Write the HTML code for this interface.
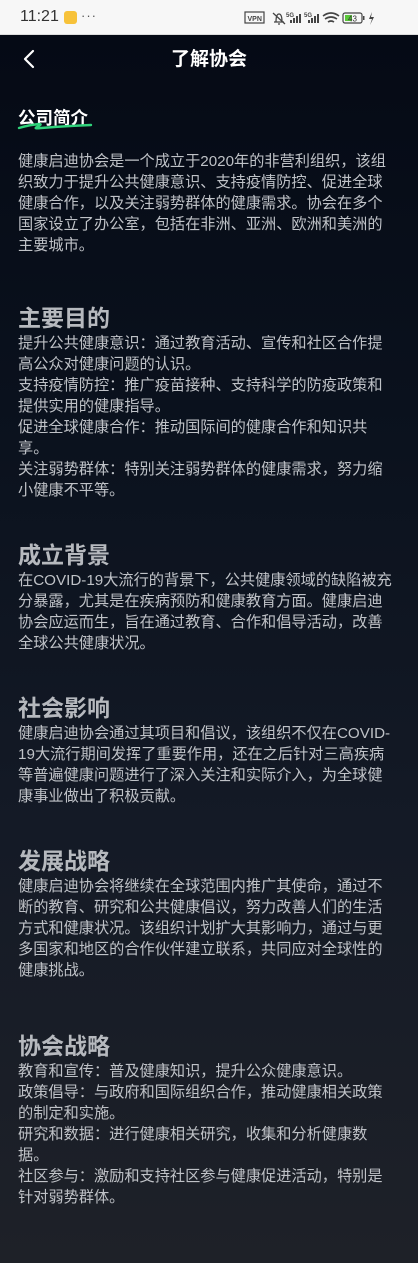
<!DOCTYPE html>
<html><head><meta charset="utf-8">
<style>
*{margin:0;padding:0;box-sizing:border-box}
html,body{width:418px;height:1280px;overflow:hidden;background:#fff}
body{position:relative;font-family:"Liberation Sans","Noto Sans CJK SC",sans-serif}
.status{position:absolute;left:0;top:0;width:418px;height:35px;background:#f7f7f7;border-bottom:1px solid #ddd}
.main{position:absolute;left:0;top:35px;width:418px;height:1228px;background:linear-gradient(180deg,#050a15 0%,#0a111d 30%,#141a26 65%,#1e2128 100%)}
.title{position:absolute;left:0;width:418px;text-align:center;color:#fff;font-size:19px;font-weight:bold;line-height:28px}
.sec{position:absolute;left:18px;white-space:nowrap}
.sec h2{font-size:23px;font-weight:bold;color:#b6b9be;line-height:30px}
.sec p{font-size:15.2px;color:#bfc2c7;line-height:21px}
</style></head><body>
<div class="status">
  <div style="position:absolute;left:20px;top:8px;font-size:16px;color:#333">11:21</div>
  <div style="position:absolute;left:64px;top:11px;width:13px;height:13px;background:#f7c23a;border-radius:3px"></div>
  <div style="position:absolute;left:81px;top:8px;font-size:13px;color:#555;letter-spacing:1px">···</div>
  <svg style="position:absolute;left:244px;top:10px" width="160" height="16" viewBox="0 0 160 16">
    <rect x="1" y="2" width="19" height="11" fill="none" stroke="#444" stroke-width="1.2"/>
    <text x="3.5" y="11" font-size="7" font-family="Liberation Sans" font-weight="bold" fill="#444">VPN</text>
    <path d="M30 12h10M32 12c0-6 1-8 3-8s3 2 3 8M34 14h2M29 3l12 11" stroke="#444" stroke-width="1.3" fill="none"/>
    <text x="42" y="7" font-size="6" font-family="Liberation Sans" font-weight="bold" fill="#444">5G</text>
    <rect x="46" y="10" width="2" height="3" fill="#444"/><rect x="49" y="8" width="2" height="5" fill="#444"/><rect x="52" y="6" width="2" height="7" fill="#444"/><rect x="55" y="4" width="2" height="9" fill="#444"/>
    <text x="60" y="7" font-size="6" font-family="Liberation Sans" font-weight="bold" fill="#444">5G</text>
    <rect x="64" y="10" width="2" height="3" fill="#444"/><rect x="67" y="8" width="2" height="5" fill="#444"/><rect x="70" y="6" width="2" height="7" fill="#444"/><rect x="73" y="4" width="2" height="9" fill="#444"/>
    <path d="M79 6q8-6 16 0M81 9q6-4 12 0M84 12q3-2 6 0" stroke="#444" stroke-width="1.6" fill="none"/>
    <rect x="99" y="3" width="19" height="10" rx="2" fill="none" stroke="#444" stroke-width="1.2"/>
    <rect x="101" y="5" width="7" height="6" fill="#5ac83a"/>
    <text x="104" y="11.5" font-size="8" font-family="Liberation Sans" fill="#333">43</text>
    <rect x="119" y="6" width="1.5" height="4" fill="#444"/>
    <path d="M128 2l-3 7h3l-2 6 4-8h-3z" fill="#444"/>
  </svg>
</div>
<div class="main">
  <svg style="position:absolute;left:22px;top:14px" width="14" height="20" viewBox="0 0 14 20"><path d="M11 2L3 10l8 8" stroke="#fff" stroke-width="2.2" fill="none" stroke-linecap="round" stroke-linejoin="round"/></svg>
  <div class="title" style="top:11px">了解协会</div>
</div>
<div class="sec" style="top:106px">
  <div style="font-size:17.5px;font-weight:bold;color:#fff;line-height:24px">公司简介</div>
</div>
<svg style="position:absolute;left:16px;top:120px" width="78" height="12" viewBox="0 0 78 12"><path d="M3 8q10-3 20-4q4 0-2 3q-4 2 4 1q25-2 50-3" stroke="#2fd27a" stroke-width="2.4" fill="none" stroke-linecap="round"/></svg>
<div class="sec" style="top:151px"><p>健康启迪协会是一个成立于2020年的非营利组织，该组<br>织致力于提升公共健康意识、支持疫情防控、促进全球<br>健康合作，以及关注弱势群体的健康需求。协会在多个<br>国家设立了办公室，包括在非洲、亚洲、欧洲和美洲的<br>主要城市。</p></div>

<div class="sec" style="top:303px"><h2>主要目的</h2><p>提升公共健康意识：通过教育活动、宣传和社区合作提<br>高公众对健康问题的认识。<br>支持疫情防控：推广疫苗接种、支持科学的防疫政策和<br>提供实用的健康指导。<br>促进全球健康合作：推动国际间的健康合作和知识共<br>享。<br>关注弱势群体：特别关注弱势群体的健康需求，努力缩<br>小健康不平等。</p></div>

<div class="sec" style="top:540px"><h2>成立背景</h2><p>在COVID-19大流行的背景下，公共健康领域的缺陷被充<br>分暴露，尤其是在疾病预防和健康教育方面。健康启迪<br>协会应运而生，旨在通过教育、合作和倡导活动，改善<br>全球公共健康状况。</p></div>

<div class="sec" style="top:693px"><h2>社会影响</h2><p>健康启迪协会通过其项目和倡议，该组织不仅在COVID-<br>19大流行期间发挥了重要作用，还在之后针对三高疾病<br>等普遍健康问题进行了深入关注和实际介入，为全球健<br>康事业做出了积极贡献。</p></div>

<div class="sec" style="top:846px"><h2>发展战略</h2><p>健康启迪协会将继续在全球范围内推广其使命，通过不<br>断的教育、研究和公共健康倡议，努力改善人们的生活<br>方式和健康状况。该组织计划扩大其影响力，通过与更<br>多国家和地区的合作伙伴建立联系，共同应对全球性的<br>健康挑战。</p></div>

<div class="sec" style="top:1031px"><h2>协会战略</h2><p>教育和宣传：普及健康知识，提升公众健康意识。<br>政策倡导：与政府和国际组织合作，推动健康相关政策<br>的制定和实施。<br>研究和数据：进行健康相关研究，收集和分析健康数<br>据。<br>社区参与：激励和支持社区参与健康促进活动，特别是<br>针对弱势群体。</p></div>
</body></html>
